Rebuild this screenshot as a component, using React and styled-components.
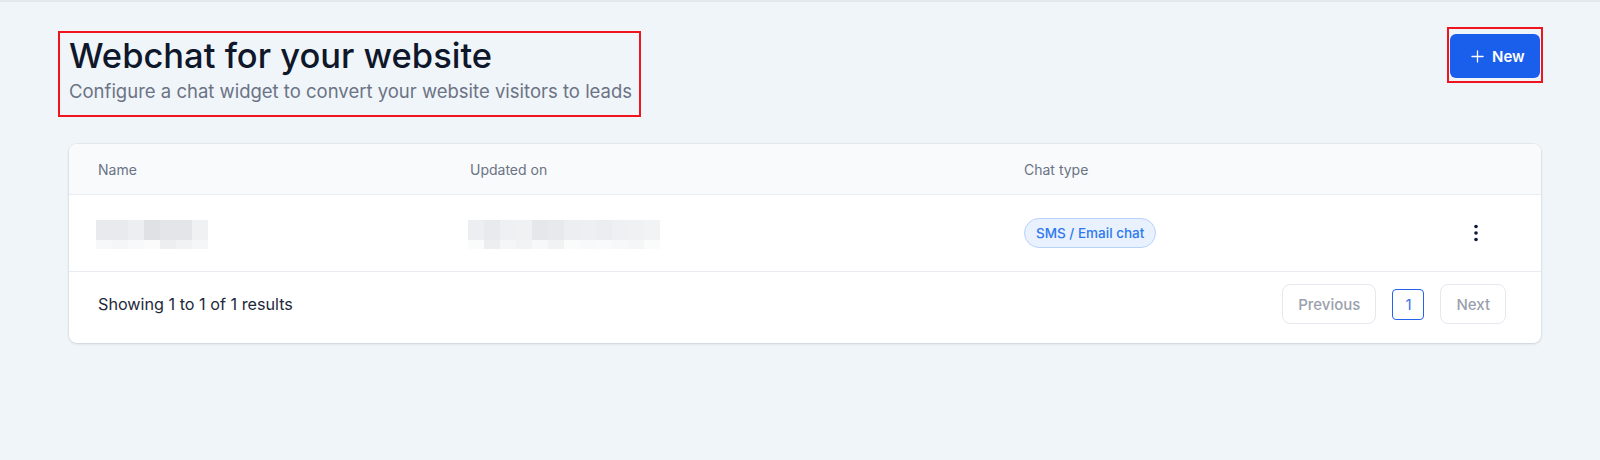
import React from 'react'
import styled, { createGlobalStyle } from 'styled-components'

const GlobalStyle = createGlobalStyle`
   html, body {
      margin: 0;
      padding: 0;
      background: #f0f5f9;
      font-family: Inter, 'Noto Sans', sans-serif;
      color: #111827;
   }
`

const Page = styled.div`
   min-height: 460px;
   box-sizing: border-box;
   border-top: 2px solid #e4e8ee;
   padding: 25px 59px 0 69px;
`

const Header = styled.div`
   display: flex;
   justify-content: space-between;
   align-items: flex-start;
   margin-right: -2px;
`

const TitleBox = styled.div`
   margin-left: -11px;
   margin-top: 4px;
   padding: 5px 7px 12px 9px;
   border: 2px solid #f0141e;
`

const Title = styled.h1`
   margin: 0;
   font-size: 34.5px;
   line-height: 36px;
   font-weight: 500;
   color: #0f172a;
`

const Subtitle = styled.p`
   margin: 5px 0 0;
   font-size: 18.5px;
   line-height: 24px;
   color: #6b7385;
`

const NewFrame = styled.div`
   padding: 5px 1px 3px;
   border: 2px solid #f0141e;
`

const NewButton = styled.button`
   display: flex;
   align-items: center;
   gap: 8px;
   width: 90px;
   height: 44px;
   padding: 0 0 0 21px;
   box-sizing: border-box;
   border: none;
   border-radius: 6px;
   background: #1a5eec;
   color: #fff;
   font-family: inherit;
   font-size: 15px;
   font-weight: 600;
   cursor: pointer;

   svg {
      width: 13px;
      height: 13px;
   }
`

const Card = styled.div`
   margin-top: 27px;
   background: #fff;
   border-radius: 8px;
   box-shadow: 0 1px 3px rgba(15, 23, 42, 0.12), 0 0 0 1px rgba(15, 23, 42, 0.04);
   overflow: hidden;
`

const Row = styled.div`
   display: grid;
   grid-template-columns: 372px 554px 1fr 74px;
   align-items: center;
   padding: 0 28px 0 29px;
   height: ${p => (p.$head ? '50px' : '76px')};
   background: ${p => (p.$head ? '#f8fafc' : '#fff')};
   border-bottom: 1px solid #e9edf2;
`

const HeadCell = styled.div`
   font-size: 14px;
   color: #6b7385;
`

const Blur = styled.div`
   display: grid;
   grid-template-columns: repeat(${p => p.$cols}, 16px);
   grid-template-rows: 20px 9px;
   margin-left: -2px;
   margin-top: 2px;
`

const Pixel = styled.span`
   background: ${p => p.$shade};
`

const Badge = styled.span`
   justify-self: start;
   display: inline-flex;
   align-items: center;
   height: 30px;
   padding: 0 11px;
   box-sizing: border-box;
   border: 1px solid #b9d2fb;
   border-radius: 15px;
   background: #e9f1fe;
   color: #2d79ef;
   font-size: 13.5px;
   font-weight: 500;
`

const Kebab = styled.button`
   justify-self: center;
   display: flex;
   align-items: center;
   justify-content: center;
   width: 24px;
   height: 24px;
   padding: 0;
   border: none;
   background: none;
   color: #0f1b3a;
   cursor: pointer;
`

const Footer = styled.div`
   display: flex;
   justify-content: space-between;
   align-items: center;
   height: 71px;
   padding: 0 35px 7px 29px;
   box-sizing: border-box;
`

const Summary = styled.span`
   font-size: 16.2px;
   color: #1e293b;
`

const Pager = styled.div`
   display: flex;
   align-items: center;
   gap: 16px;
`

const PageButton = styled.button`
   height: 40px;
   padding: 0 ${p => p.$pad}px;
   border: 1px solid #e5e8ee;
   border-radius: 8px;
   background: #fff;
   color: #9aa1ad;
   font-family: inherit;
   font-size: 15px;
   font-weight: 500;
`

const PageNumber = styled.span`
   display: flex;
   align-items: center;
   justify-content: center;
   width: 32px;
   height: 31px;
   box-sizing: border-box;
   border: 1.5px solid #2563eb;
   border-radius: 4px;
   color: #3b6fe8;
   font-size: 15px;
`

const nameShades = [
   '#e9eaee', '#e9eaee', '#eceef1', '#dfe1e5', '#e3e5e8', '#e3e5e8', '#f0f1f3',
   '#f7f8f9', '#f5f6f7', '#f8f9fa', '#fbfbfc', '#eceef0', '#f1f2f4', '#f5f6f7'
]

const dateShades = [
   '#eceef1', '#e9eaee', '#eef0f2', '#f0f1f3', '#e5e7ea', '#e7e9ec', '#eceef1', '#eeeff2', '#ecedf0', '#eef0f2', '#f0f1f3', '#f2f3f5',
   '#fafbfb', '#eceef0', '#f5f6f7', '#f2f3f5', '#f7f8f9', '#f1f2f4', '#fafbfb', '#f8f9fa', '#f9fafb', '#f7f8f9', '#f5f6f7', '#fafbfb'
]

const Blurred = ({ shades }) => (
   <Blur $cols={shades.length / 2}>
      {shades.map((s, i) => (
         <Pixel key={i} $shade={s} />
      ))}
   </Blur>
)

const PlusIcon = () => (
   <svg viewBox='0 0 14 14' fill='none' stroke='currentColor' strokeWidth='1.4' strokeLinecap='round'>
      <path d='M7 1v12M1 7h12' />
   </svg>
)

const DotsIcon = () => (
   <svg width='4' height='18' viewBox='0 0 4 18' fill='currentColor'>
      <circle cx='2' cy='2.5' r='1.8' />
      <circle cx='2' cy='9' r='1.8' />
      <circle cx='2' cy='15.5' r='1.8' />
   </svg>
)

const App = () => (
   <>
      <GlobalStyle />
      <Page>
         <Header>
            <TitleBox>
               <Title>Webchat for your website</Title>
               <Subtitle>Configure a chat widget to convert your website visitors to leads</Subtitle>
            </TitleBox>
            <NewFrame>
               <NewButton>
                  <PlusIcon />
                  New
               </NewButton>
            </NewFrame>
         </Header>

         <Card>
            <Row $head>
               <HeadCell>Name</HeadCell>
               <HeadCell>Updated on</HeadCell>
               <HeadCell>Chat type</HeadCell>
               <div />
            </Row>
            <Row>
               <Blurred shades={nameShades} />
               <Blurred shades={dateShades} />
               <Badge>SMS / Email chat</Badge>
               <Kebab>
                  <DotsIcon />
               </Kebab>
            </Row>
            <Footer>
               <Summary>Showing 1 to 1 of 1 results</Summary>
               <Pager>
                  <PageButton $pad={15}>Previous</PageButton>
                  <PageNumber>1</PageNumber>
                  <PageButton $pad={15}>Next</PageButton>
               </Pager>
            </Footer>
         </Card>
      </Page>
   </>
)

export default App
